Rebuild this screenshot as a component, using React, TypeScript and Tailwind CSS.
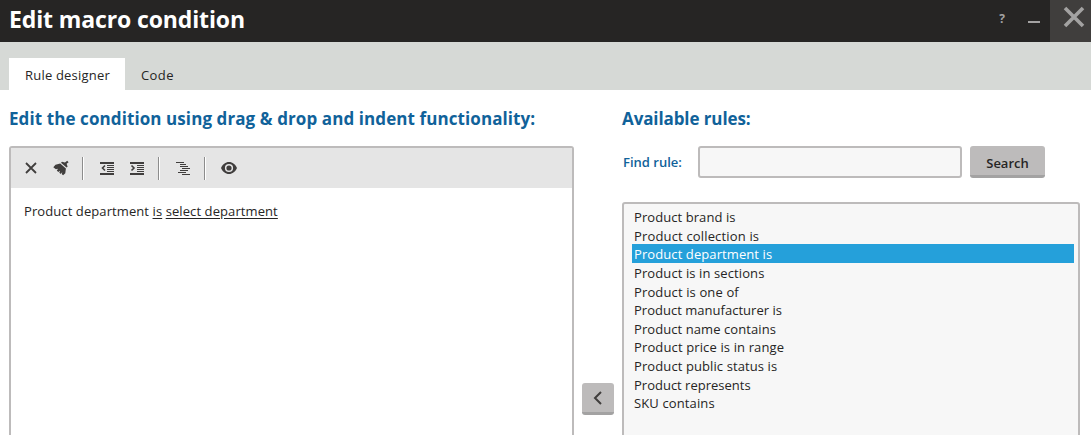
import { ReactNode } from "react";

const rules = [
  { name: "Product brand is", tracking: "tracking-[0.07px]" },
  { name: "Product collection is", tracking: "tracking-[0.16px]" },
  { name: "Product department is", tracking: "tracking-[0.09px]" },
  { name: "Product is in sections", tracking: "tracking-[0.1px]" },
  { name: "Product is one of", tracking: "tracking-[0.13px]" },
  { name: "Product manufacturer is", tracking: "tracking-[0.02px]" },
  { name: "Product name contains", tracking: "tracking-[0.08px]" },
  { name: "Product price is in range", tracking: "tracking-[0.13px]" },
  { name: "Product public status is", tracking: "tracking-[0.1px]" },
  { name: "Product represents", tracking: "tracking-[0px]" },
  { name: "SKU contains", tracking: "tracking-[0.12px]" },
];

function Icon({ className, children }: { className: string; children: ReactNode }) {
  return (
    <svg viewBox="0 0 16 16" className={`h-4 w-4 shrink-0 fill-[#403e3d] ${className}`}>
      {children}
    </svg>
  );
}

function Divider({ className }: { className: string }) {
  return <div className={`h-[23px] w-0.5 shrink-0 border-l border-[#8c8c8c] bg-white ${className}`} />;
}

function Toolbar() {
  return (
    <div className="flex h-10 items-center bg-[#e5e5e5] pl-3">
      <Icon className="">
        <path d="M3 3l10 10M13 3L3 13" fill="none" stroke="#403e3d" strokeWidth="1.8" />
      </Icon>
      <Icon className="ml-[14px]">
        <path d="M14.200.8l1.400 1.400-2 1.500 1 3-1.100.8L8 2.700l1-1 3 .9z" />
        <path d="M7.200 3.400l5.700 5-.6 4.800-2.200 2-1.200-1 .3-2.200-1.300 1.900-1.600-1.200.8-2-1.900 1.300-1.400-1.500 1.300-1.800-2.200.6L.3 7.200l2.200-2.500z" />
      </Icon>
      <Divider className="ml-[13px]" />
      <Icon className="ml-[15px]">
        <path d="M1 2h14v2H1zM8 5h7v1H8zM8 7h7v1H8zM8 9h7v1H8zM8 11h7v1H8zM1 13h14v2H1z" />
        <path d="M6 5.500 3.500 8 6 10.500" fill="none" stroke="#403e3d" strokeWidth="1.600" />
      </Icon>
      <Icon className="ml-[14px]">
        <path d="M1 2h14v2H1zM8 5h7v1H8zM8 7h7v1H8zM8 9h7v1H8zM8 11h7v1H8zM1 13h14v2H1z" />
        <path d="M2.500 5.500 5 8l-2.500 2.500" fill="none" stroke="#403e3d" strokeWidth="1.600" />
      </Icon>
      <Divider className="ml-[13px]" />
      <Icon className="ml-[15px]">
        <path d="M1 2h8v1H1zM5 4h6v1H5zM5 6h8v1H5zM7 8h8v1H7zM5 10h8v1H5zM3 12h8v1H3zM7 14h8v1H7z" />
      </Icon>
      <Divider className="ml-[13px]" />
      <Icon className="ml-[15px]">
        <path
          fillRule="evenodd"
          d="M8 2C4.500 2 1.500 4.500 0 8c1.500 3.500 4.500 6 8 6s6.500-2.500 8-6c-1.500-3.500-4.500-6-8-6zm0 1.900a4.100 4.100 0 1 1 0 8.200 4.100 4.100 0 0 1 0-8.200zm0 1.500a2.600 2.600 0 1 0 0 5.200 2.600 2.600 0 0 0 0-5.200z"
        />
      </Icon>
    </div>
  );
}

export default function App() {
  return (
    <div className="flex h-[435px] w-[1091px] flex-col overflow-hidden bg-white font-['Open_Sans','Noto_Sans',sans-serif] text-[13px] text-[#262524]">
      <header className="flex h-[42px] shrink-0 bg-[#262524]">
        <h1 className="flex-1 pl-[9px] text-[23px] leading-[39px] font-bold tracking-[-0.13px] whitespace-nowrap text-white">
          Edit macro condition
        </h1>
        <button className="w-8 pb-1 text-center text-[12px] font-bold text-[#a3a2a2]">?</button>
        <button className="flex w-8 justify-center pt-[21px]">
          <span className="h-0.5 w-3 bg-[#a3a2a2]" />
        </button>
        <button className="h-[42px] w-[41px] bg-[#403e3d]">
          <svg viewBox="0 0 41 42" className="h-[42px] w-[41px]">
            <path d="M15 8l18 18M33 8L15 26" fill="none" stroke="#a3a2a2" strokeWidth="3.600" />
          </svg>
        </button>
      </header>

      <nav className="flex h-12 shrink-0 items-end bg-[#d6d9d6] pl-[9px]">
        <button className="h-8 w-[116px] bg-white pt-px pl-4 text-left leading-8 tracking-[0.2px] whitespace-nowrap">
          Rule designer
        </button>
        <button className="h-8 pt-px pl-4 text-left leading-8 tracking-[0.4px] whitespace-nowrap">Code</button>
      </nav>

      <main className="flex min-h-0 flex-1">
        <section className="ml-[9px] w-[565px] shrink-0">
          <h2 className="h-14 pt-[17px] text-[17px] leading-6 font-bold tracking-[0.09px] whitespace-nowrap text-[#10629a]">
            Edit the condition using drag &amp; drop and indent functionality:
          </h2>
          <div className="h-[300px] rounded-[3px] border-2 border-[#bdbbbb]">
            <Toolbar />
            <p className="pt-[13px] pl-[13px] leading-5 tracking-[0.09px] whitespace-nowrap">
              Product department <span className="underline underline-offset-2">is</span>{" "}
              <span className="underline underline-offset-2">select department</span>
            </p>
          </div>
        </section>

        <div className="flex w-12 shrink-0 justify-center pt-[293px]">
          <button className="flex h-8 w-8 items-center justify-center rounded-[3px] border-b-3 border-[#a3a2a2] bg-[#bdbbbb]">
            <svg viewBox="0 0 16 16" className="h-4 w-4">
              <path d="M11 2 5 8l6 6" fill="none" stroke="#403e3d" strokeWidth="2" />
            </svg>
          </button>
        </div>

        <section className="w-[458px] shrink-0">
          <h2 className="h-14 pt-[17px] text-[17px] leading-6 font-bold tracking-[-0.1px] whitespace-nowrap text-[#10629a]">
            Available rules:
          </h2>
          <div className="flex h-8">
            <label className="w-[76px] pl-px leading-8 font-semibold whitespace-nowrap text-[#10629a]">Find rule:</label>
            <input className="h-8 w-[264px] rounded-[3px] border-2 border-[#bdbbbb] bg-[#f7f7f7] outline-none" />
            <button className="ml-2 h-8 w-[75px] rounded-[3px] border-b-3 border-[#a3a2a2] bg-[#bdbbbb] pt-1 text-center leading-5 font-semibold">
              Search
            </button>
          </div>
          <ul className="mt-6 h-[260px] rounded-[3px] border-2 border-[#bdbbbb] bg-[#f7f7f7] px-2 pt-[3px] pr-1">
            {rules.map((rule, i) => (
              <li
                key={rule.name}
                className={`h-[18.65px] pl-0.5 leading-[21px] whitespace-nowrap ${i === 2 ? "bg-[#25a0da] text-white" : ""}`}
              >
                <span className={rule.tracking}>{rule.name}</span>
              </li>
            ))}
          </ul>
        </section>
      </main>
    </div>
  );
}
